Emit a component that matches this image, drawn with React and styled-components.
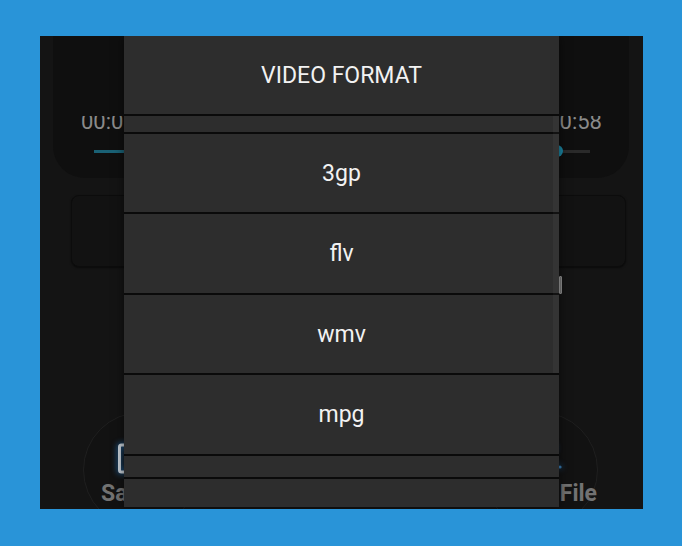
import React from 'react';
import styled, { createGlobalStyle } from 'styled-components';

const GlobalStyle = createGlobalStyle`
  html, body {
    margin: 0;
    padding: 0;
  }
  body {
    background: #2994d8;
    font-family: Roboto, "Liberation Sans", sans-serif;
  }
`;

const Page = styled.div`
  width: 682px;
  height: 546px;
  padding-top: 36px;
  box-sizing: border-box;
`;

const Phone = styled.div`
  position: relative;
  width: 603px;
  height: 473px;
  margin-left: 40px;
  background: #141414;
  overflow: hidden;
  display: flex;
  flex-direction: column;
`;

const TimeCard = styled.div`
  margin: 0 14px 0 13px;
  height: 142px;
  box-sizing: border-box;
  padding-top: 80px;
  background: #0f0f0f;
  border-radius: 0 0 32px 32px;
  flex-shrink: 0;
`;

const TimeRow = styled.div`
  display: flex;
  justify-content: space-between;
  height: 15px;
  overflow: hidden;
  padding: 0 27px 0 28px;
`;

const TimeText = styled.span`
  font-size: 22px;
  line-height: 22px;
  margin-top: -5px;
  color: #8a8a8a;
`;

const Slider = styled.div`
  display: flex;
  align-items: center;
  height: 12px;
  margin: 14px 39px 0 41px;
`;

const Filled = styled.div`
  width: 457px;
  height: 3px;
  background: #1a6175;
`;

const Knob = styled.div`
  width: 12px;
  height: 12px;
  border-radius: 50%;
  background: #1b86a3;
`;

const Rest = styled.div`
  flex: 1;
  height: 3px;
  background: #2a2a2a;
`;

const ToolCard = styled.div`
  margin: 17px 17px 0 31px;
  height: 72px;
  box-sizing: border-box;
  background: #121212;
  border: 1px solid #0c0c0c;
  border-radius: 8px;
  box-shadow: 0 1px 2px rgba(0, 0, 0, 0.5);
  flex-shrink: 0;
`;

const ButtonsRow = styled.div`
  display: flex;
  justify-content: space-between;
  margin-top: 145px;
  padding: 0 45px 0 43px;
`;

const CircleButton = styled.div`
  width: 116px;
  height: 116px;
  flex-shrink: 0;
  box-sizing: border-box;
  border-radius: 50%;
  border: 1px solid #1f1f1f;
  background: #121212;
  display: flex;
  flex-direction: column;
  align-items: center;
  padding-top: 30px;
`;

const ButtonLabel = styled.span`
  align-self: ${p => (p.$side === 'left' ? 'flex-start' : 'flex-end')};
  margin-left: ${p => (p.$side === 'left' ? '17px' : '0')};
  margin-top: 7px;
  font-size: 23px;
  line-height: 23px;
  font-weight: 700;
  color: #727272;
  white-space: nowrap;
`;

const Glow = styled.svg`
  flex-shrink: 0;
  filter: drop-shadow(0 0 3px rgba(40, 140, 230, 0.9));
`;

const Dialog = styled.div`
  position: absolute;
  top: 0;
  left: 84px;
  width: 435px;
  height: 471px;
  background: #2d2d2d;
  display: flex;
  flex-direction: column;
  box-shadow: 0 0 10px rgba(0, 0, 0, 0.55);
`;

const Title = styled.div`
  height: 78px;
  flex-shrink: 0;
  display: flex;
  align-items: center;
  justify-content: center;
  font-size: 23px;
  color: #f2f2f2;
`;

const Strip = styled.div`
  height: ${p => p.$h};
  flex: ${p => (p.$grow ? 1 : '0 0 auto')};
  border-top: 2px solid #0a0a0a;
`;

const Option = styled.div`
  height: ${p => p.$h}px;
  flex-shrink: 0;
  border-top: 2px solid #0a0a0a;
  display: flex;
  align-items: center;
  justify-content: center;
  font-size: 23px;
  color: #f2f2f2;
`;

const ScrollTrack = styled.div`
  position: absolute;
  top: 80px;
  right: 0;
  width: 6px;
  height: 257px;
  background: rgba(255, 255, 255, 0.035);
`;

const ScrollThumb = styled.div`
  position: absolute;
  left: 519px;
  top: 240px;
  width: 3px;
  height: 18px;
  box-sizing: border-box;
  border-radius: 1px;
  background: #5e5e5e;
  border: 1px solid #777;
`;

const formats = [
  { name: '3gp', h: 78 },
  { name: 'flv', h: 79 },
  { name: 'wmv', h: 78 },
  { name: 'mpg', h: 79 },
];

export default function App() {
  return (
    <Page>
      <GlobalStyle />
      <Phone>
        <TimeCard>
          <TimeRow>
            <TimeText>00:00</TimeText>
            <TimeText>00:58</TimeText>
          </TimeRow>
          <Slider>
            <Filled />
            <Knob />
            <Rest />
          </Slider>
        </TimeCard>
        <ToolCard />
        <ButtonsRow>
          <CircleButton>
            <Glow width="46" height="32" viewBox="0 0 46 32">
              <rect x="1.5" y="2" width="43" height="27" rx="2" fill="none" stroke="#c4ccd4" strokeWidth="3" />
              <rect x="12" y="2" width="20" height="9" fill="none" stroke="#c4ccd4" strokeWidth="2.5" />
            </Glow>
            <ButtonLabel $side="left">Save</ButtonLabel>
          </CircleButton>
          <CircleButton>
            <Glow width="46" height="32" viewBox="0 0 46 32">
              <circle cx="8" cy="14" r="4" fill="none" stroke="#c4ccd4" strokeWidth="2.5" />
              <circle cx="34" cy="5" r="3.5" fill="none" stroke="#c4ccd4" strokeWidth="2.5" />
              <circle cx="43" cy="24" r="1.6" fill="#3a7fb8" />
              <path d="M11.5 12.5 L30.5 6.5 M11.5 16 L40 23" stroke="#c4ccd4" strokeWidth="2.5" />
            </Glow>
            <ButtonLabel $side="right">Open File</ButtonLabel>
          </CircleButton>
        </ButtonsRow>

        <Dialog>
          <Title>VIDEO FORMAT</Title>
          <Strip $h="16px" />
          {formats.map(f => (
            <Option key={f.name} $h={f.h}>{f.name}</Option>
          ))}
          <Strip $h="21px" />
          <Strip $grow />
          <ScrollTrack />
        </Dialog>
        <ScrollThumb />
      </Phone>
    </Page>
  );
}
